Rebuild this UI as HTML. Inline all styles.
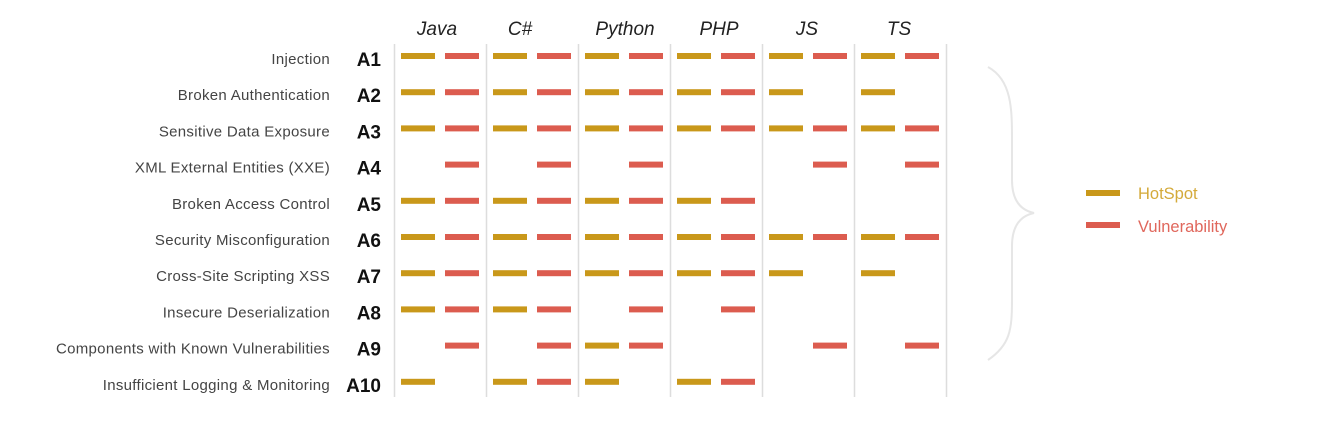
<!DOCTYPE html>
<html><head><meta charset="utf-8"><style>
html,body{margin:0;padding:0;background:#fff;width:1317px;height:435px;overflow:hidden}
svg{display:block}
.lbl{font-family:"Liberation Sans",sans-serif;font-size:15px;letter-spacing:0.3px;fill:#444}
.a{font-family:"Liberation Sans",sans-serif;font-size:19px;font-weight:bold;fill:#111}
.h{font-family:"Liberation Sans",sans-serif;font-size:19px;font-style:italic;fill:#222}
</style></head><body>
<svg width="1317" height="435" xmlns="http://www.w3.org/2000/svg" id="s">
<g stroke="#ddd" stroke-width="1.5">
<line x1="394.5" y1="44" x2="394.5" y2="397"/><line x1="486.5" y1="44" x2="486.5" y2="397"/>
<line x1="578.5" y1="44" x2="578.5" y2="397"/><line x1="670.5" y1="44" x2="670.5" y2="397"/>
<line x1="762.5" y1="44" x2="762.5" y2="397"/><line x1="854.5" y1="44" x2="854.5" y2="397"/>
<line x1="946.5" y1="44" x2="946.5" y2="397"/>
</g>
<g class="h" text-anchor="middle">
<text x="437" y="35">Java</text><text x="520" y="35">C#</text><text x="625" y="35">Python</text>
<text x="719" y="35">PHP</text><text x="807" y="35">JS</text><text x="899" y="35">TS</text>
</g>
<g id="rows"></g>
<path d="M988,67 C1012,80 1012,110 1012,140 L1012,180 C1012,200 1020,210 1034,213 C1020,216 1012,226 1012,246 L1012,300 C1012,330 1010,345 988,360" fill="none" stroke="#e6e6e6" stroke-width="2"/>
<rect x="1086" y="190" width="34" height="6" fill="#c9981a"/>
<rect x="1086" y="222" width="34" height="6" fill="#dc5c4f"/>
<text x="1138" y="199" font-family="Liberation Sans,sans-serif" font-size="16.5" fill="#d4aa3a">HotSpot</text>
<text x="1138" y="232" font-family="Liberation Sans,sans-serif" font-size="16.5" fill="#e0675c">Vulnerability</text>
</svg>
<script>
var names=["Injection","Broken Authentication","Sensitive Data Exposure","XML External Entities (XXE)","Broken Access Control","Security Misconfiguration","Cross-Site Scripting XSS","Insecure Deserialization","Components with Known Vulnerabilities","Insufficient Logging & Monitoring"];
var d=["111111111111","111111111010","111111111111","010101000101","111111110000","111111111111","111111111010","111101010000","010111000101","101110110000"];
var g=document.getElementById("rows"),h="";
for(var r=0;r<10;r++){var yc=56+r*36.2;
h+='<text class="lbl" x="330" y="'+(yc+8)+'" text-anchor="end">'+names[r].replace("&","&amp;")+'</text>';
h+='<text class="a" x="381" y="'+(yc+10)+'" text-anchor="end">A'+(r+1)+'</text>';
for(var c=0;c<6;c++){for(var k=0;k<2;k++){if(d[r][c*2+k]=="1"){
h+='<rect x="'+(401+c*92+k*44)+'" y="'+(yc-3)+'" width="34" height="6" fill="'+(k?"#dc5c4f":"#c9981a")+'"/>';}}}}
g.innerHTML=h;
</script>
</body></html>
